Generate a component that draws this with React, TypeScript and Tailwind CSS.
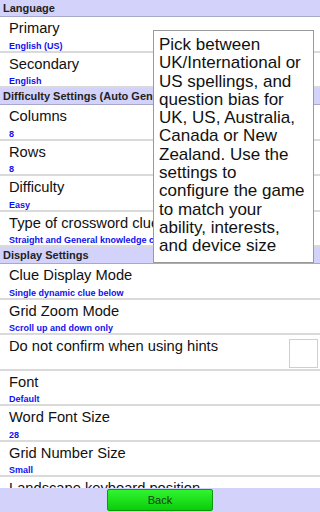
import React from "react";

type Row =
  | { kind: "header"; title: string }
  | { kind: "item"; title: string; value?: string; checkbox?: boolean };

const rows: Row[] = [
  { kind: "header", title: "Language" },
  { kind: "item", title: "Primary", value: "English (US)" },
  { kind: "item", title: "Secondary", value: "English" },
  { kind: "header", title: "Difficulty Settings (Auto Generated Puzzles)" },
  { kind: "item", title: "Columns", value: "8" },
  { kind: "item", title: "Rows", value: "8" },
  { kind: "item", title: "Difficulty", value: "Easy" },
  { kind: "item", title: "Type of crossword clue", value: "Straight and General knowledge clues" },
  { kind: "header", title: "Display Settings" },
  { kind: "item", title: "Clue Display Mode", value: "Single dynamic clue below" },
  { kind: "item", title: "Grid Zoom Mode", value: "Scroll up and down only" },
  { kind: "item", title: "Do not confirm when using hints", checkbox: true },
  { kind: "item", title: "Font", value: "Default" },
  { kind: "item", title: "Word Font Size", value: "28" },
  { kind: "item", title: "Grid Number Size", value: "Small" },
  { kind: "item", title: "Landscape keyboard position", value: "Bottom" },
];

function Header({ title }: { title: string }) {
  return (
    <div className="h-[17px] bg-[#d2d2fa] border-b border-[#a8a8c8] pl-[3px] flex items-center text-[11px] font-bold text-[#222] whitespace-nowrap overflow-hidden leading-none">
      {title}
    </div>
  );
}

function Item({ title, value, checkbox }: { title: string; value?: string; checkbox?: boolean }) {
  return (
    <div className="h-[35.5px] bg-white border-b-2 border-[#dadada] pl-[9px] pr-[2px] flex items-start whitespace-nowrap overflow-hidden">
      <div className="flex-1 min-w-0">
        <div className="text-[14.7px] leading-none text-[#111] mt-[4px]">{title}</div>
        {value && (
          <div className="text-[9px] font-bold leading-none text-[#1010ee] mt-[6px]">{value}</div>
        )}
      </div>
      {checkbox && (
        <div className="w-[29px] h-[29px] border border-[#cfcfcf] bg-white mt-[4px] shrink-0" />
      )}
    </div>
  );
}

export default function App() {
  return (
    <div
      className="w-[320px] h-[512px] relative flex flex-col bg-white overflow-hidden"
      style={{ fontFamily: '"Liberation Sans", Arial, sans-serif' }}
    >
      <div className="flex-1 min-h-0 overflow-hidden">
        {rows.map((r, i) =>
          r.kind === "header" ? (
            <Header key={i} title={r.title} />
          ) : (
            <Item key={i} title={r.title} value={r.value} checkbox={r.checkbox} />
          )
        )}
      </div>

      {/* bottom bar */}
      <div className="h-[24px] bg-[#d2d2fa] flex justify-center items-start shrink-0">
        <button className="w-[106px] h-[22px] mt-[1px] rounded-[2px] border border-[#0a9a0a] bg-gradient-to-b from-[#2ef52e] to-[#08cc08] text-[11px] text-[#1a3a1a] leading-none">
          Back
        </button>
      </div>

      {/* help tooltip */}
      <div className="absolute left-[153px] top-[30px] w-[161px] h-[233px] bg-white border border-[#9a9a9a] pl-[5px] pr-[7px] pt-[5px] text-[17px] leading-[18.3px] text-[#111]">
        Pick between UK/International or US spellings, and question bias for UK, US, Australia, Canada or New Zealand. Use the settings to configure the game to match your ability, interests, and device size
      </div>
    </div>
  );
}
